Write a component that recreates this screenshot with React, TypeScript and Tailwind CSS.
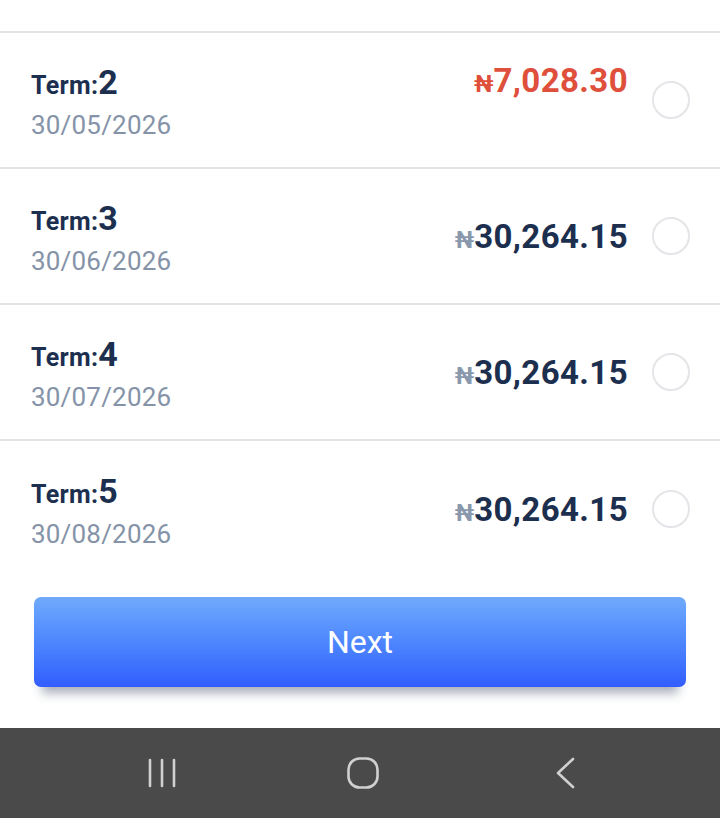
import React from 'react';

interface Term {
  term: number;
  date: string;
  amount: string;
  overdue?: boolean;
}

const terms: Term[] = [
  { term: 2, date: '30/05/2026', amount: '7,028.30', overdue: true },
  { term: 3, date: '30/06/2026', amount: '30,264.15' },
  { term: 4, date: '30/07/2026', amount: '30,264.15' },
  { term: 5, date: '30/08/2026', amount: '30,264.15' },
];

function TermRow({ item, last }: { item: Term; last: boolean }) {
  return (
    <div
      className={`flex h-[136px] items-center pl-[31px] pr-[30px] ${last ? '' : 'border-b-2 border-[#e3e3e5]'}`}
    >
      <div className="flex flex-1 flex-col pt-[2px]">
        <div className="flex items-baseline text-[#1d2f4f] font-bold leading-none">
          <span className="text-[25px] tracking-[0.3px]">Term:</span>
          <span className="text-[34px]">{item.term}</span>
        </div>
        <div className="mt-[13px] text-[26px] leading-none tracking-[0.2px] text-[#8593a8]">{item.date}</div>
      </div>
      <div
        className={`flex items-baseline font-bold leading-none ${item.overdue ? 'mb-[40px] text-[#de503c]' : 'text-[#1d2f4f]'}`}
      >
        <span className={`text-[24px] ${item.overdue ? 'text-[#de503c]' : 'text-[#8a98ad]'}`}>₦</span>
        <span className="text-[33px] tracking-[0.4px]">{item.amount}</span>
      </div>
      <div className="ml-[24px] h-[38px] w-[38px] rounded-full border-2 border-[#e4e5e8]" />
    </div>
  );
}

export default function App() {
  return (
    <div className="flex h-[818px] w-[720px] flex-col bg-white font-['Roboto',sans-serif]">
      <div className="h-[33px] border-b-2 border-[#e3e3e5]" />
      {terms.map((item, i) => (
        <TermRow key={item.term} item={item} last={i === terms.length - 1} />
      ))}
      <div className="px-[34px] pt-[20px]">
        <button className="flex h-[90px] w-full items-center justify-center rounded-[7px] bg-gradient-to-b from-[#70aafc] to-[#335cfd] text-[32px] text-white shadow-[0_14px_10px_-8px_rgba(60,70,100,0.45)]">
          Next
        </button>
      </div>
      <div className="flex-1" />
      <div className="flex h-[90px] items-center bg-[#4a4a4a] pl-[147px] text-[#d0d0d0]">
        <svg width="30" height="30" viewBox="0 0 30 30">
          <path d="M3 2v26M15 2v26M27 2v26" stroke="currentColor" strokeWidth="2.6" strokeLinecap="round" />
        </svg>
        <svg width="32" height="32" viewBox="0 0 32 32" className="ml-[170px]">
          <rect x="1.5" y="1.5" width="29" height="29" rx="11" fill="none" stroke="currentColor" strokeWidth="2.6" />
        </svg>
        <svg width="22" height="32" viewBox="0 0 22 32" className="ml-[175px]">
          <path d="M19 2L4 16l15 14" fill="none" stroke="currentColor" strokeWidth="2.6" strokeLinecap="round" strokeLinejoin="round" />
        </svg>
      </div>
    </div>
  );
}
